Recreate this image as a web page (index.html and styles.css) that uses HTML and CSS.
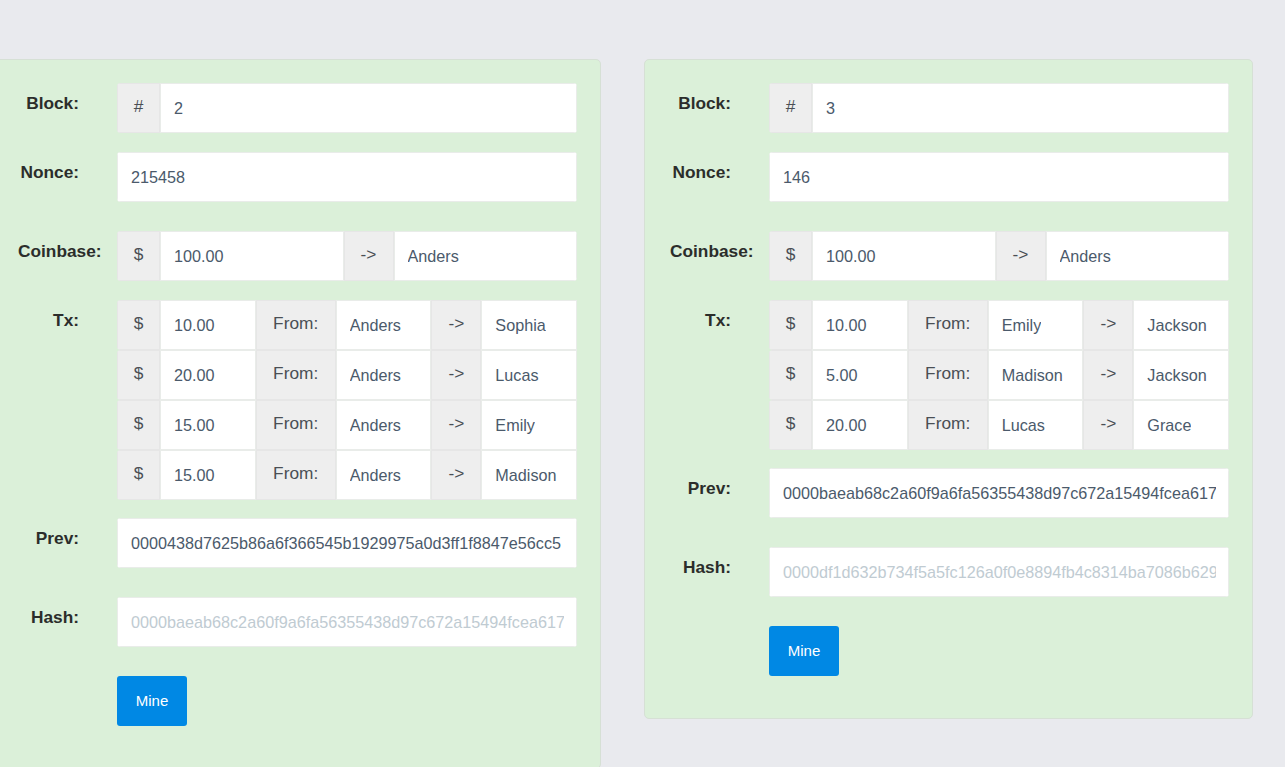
FILE: index.html
```html
<!DOCTYPE html>
<html lang="en">
<head>
<meta charset="utf-8">
<title>Blockchain</title>
<link rel="stylesheet" href="styles.css">
</head>
<body>
<div class="chain">
  <section class="card">
    <div class="row">
      <div class="label">Block:</div>
      <div class="group"><span class="addon addon-sym">#</span><div class="field"><span class="val">2</span></div></div>
    </div>
    <div class="row row-wide">
      <div class="label">Nonce:</div>
      <div class="group"><div class="field"><span class="val">215458</span></div></div>
    </div>
    <div class="row">
      <div class="label">Coinbase:</div>
      <div class="group"><span class="addon addon-sym">$</span><div class="field"><span class="val">100.00</span></div><span class="addon addon-arrow">-&gt;</span><div class="field"><span class="val">Anders</span></div></div>
    </div>
    <div class="row row-tx">
      <div class="label">Tx:</div>
      <div class="tx-list">
        <div class="group"><span class="addon addon-sym">$</span><div class="field"><span class="val">10.00</span></div><span class="addon addon-from">From:</span><div class="field"><span class="val">Anders</span></div><span class="addon addon-arrow">-&gt;</span><div class="field"><span class="val">Sophia</span></div></div>
        <div class="group"><span class="addon addon-sym">$</span><div class="field"><span class="val">20.00</span></div><span class="addon addon-from">From:</span><div class="field"><span class="val">Anders</span></div><span class="addon addon-arrow">-&gt;</span><div class="field"><span class="val">Lucas</span></div></div>
        <div class="group"><span class="addon addon-sym">$</span><div class="field"><span class="val">15.00</span></div><span class="addon addon-from">From:</span><div class="field"><span class="val">Anders</span></div><span class="addon addon-arrow">-&gt;</span><div class="field"><span class="val">Emily</span></div></div>
        <div class="group"><span class="addon addon-sym">$</span><div class="field"><span class="val">15.00</span></div><span class="addon addon-from">From:</span><div class="field"><span class="val">Anders</span></div><span class="addon addon-arrow">-&gt;</span><div class="field"><span class="val">Madison</span></div></div>
      </div>
    </div>
    <div class="row row-wide">
      <div class="label">Prev:</div>
      <div class="group"><div class="field"><span class="val">0000438d7625b86a6f366545b1929975a0d3ff1f8847e56cc5</span></div></div>
    </div>
    <div class="row row-wide">
      <div class="label">Hash:</div>
      <div class="group"><div class="field field-hash"><span class="val">0000baeab68c2a60f9a6fa56355438d97c672a15494fcea617</span></div></div>
    </div>
    <div class="row row-last">
      <div class="label"></div>
      <div><button class="mine" type="button">Mine</button></div>
    </div>
  </section>

  <section class="card">
    <div class="row">
      <div class="label">Block:</div>
      <div class="group"><span class="addon addon-sym">#</span><div class="field"><span class="val">3</span></div></div>
    </div>
    <div class="row row-wide">
      <div class="label">Nonce:</div>
      <div class="group"><div class="field"><span class="val">146</span></div></div>
    </div>
    <div class="row">
      <div class="label">Coinbase:</div>
      <div class="group"><span class="addon addon-sym">$</span><div class="field"><span class="val">100.00</span></div><span class="addon addon-arrow">-&gt;</span><div class="field"><span class="val">Anders</span></div></div>
    </div>
    <div class="row row-tx">
      <div class="label">Tx:</div>
      <div class="tx-list">
        <div class="group"><span class="addon addon-sym">$</span><div class="field"><span class="val">10.00</span></div><span class="addon addon-from">From:</span><div class="field"><span class="val">Emily</span></div><span class="addon addon-arrow">-&gt;</span><div class="field"><span class="val">Jackson</span></div></div>
        <div class="group"><span class="addon addon-sym">$</span><div class="field"><span class="val">5.00</span></div><span class="addon addon-from">From:</span><div class="field"><span class="val">Madison</span></div><span class="addon addon-arrow">-&gt;</span><div class="field"><span class="val">Jackson</span></div></div>
        <div class="group"><span class="addon addon-sym">$</span><div class="field"><span class="val">20.00</span></div><span class="addon addon-from">From:</span><div class="field"><span class="val">Lucas</span></div><span class="addon addon-arrow">-&gt;</span><div class="field"><span class="val">Grace</span></div></div>
      </div>
    </div>
    <div class="row row-wide">
      <div class="label">Prev:</div>
      <div class="group"><div class="field"><span class="val">0000baeab68c2a60f9a6fa56355438d97c672a15494fcea617</span></div></div>
    </div>
    <div class="row row-wide">
      <div class="label">Hash:</div>
      <div class="group"><div class="field field-hash"><span class="val">0000df1d632b734f5a5fc126a0f0e8894fb4c8314ba7086b629</span></div></div>
    </div>
    <div class="row row-last">
      <div class="label"></div>
      <div><button class="mine" type="button">Mine</button></div>
    </div>
  </section>
</div>
</body>
</html>
```
FILE: styles.css
```css
* { box-sizing: border-box; }
html, body {
  margin: 0;
  height: 100%;
  overflow: hidden;
  background: #e9eaee;
  font-family: "Liberation Sans", Arial, sans-serif;
}
.chain {
  display: flex;
  align-items: flex-start;
  gap: 43px;
  padding-top: 59px;
  margin-left: -8px;
}
.card {
  flex: 0 0 609px;
  width: 609px;
  background: #dbf0d9;
  border: 1px solid #d6e0d5;
  border-radius: 5px;
  padding: 23px 23px 42px 25px;
}
.row {
  display: grid;
  grid-template-columns: 61px 460px;
  column-gap: 38px;
  margin-bottom: 19px;
}
.row-wide { margin-bottom: 29px; }
.row-tx { margin-bottom: 18px; }
.row-last { margin-bottom: 0; }
.label {
  font-size: 17.3px;
  font-weight: bold;
  color: #2b2d2b;
  line-height: 41px;
  text-align: right;
  white-space: nowrap;
}
.tx-list { display: flex; flex-direction: column; }
.group {
  display: flex;
  height: 50px;
  border-radius: 4px;
  overflow: hidden;
}
.tx-list .group { border-radius: 4px 0 0 4px; }
.addon {
  flex: 0 0 auto;
  display: flex;
  align-items: center;
  justify-content: center;
  background: #eeeeee;
  border: 1px solid #e6e6e6;
  color: #4a4f55;
  font-size: 17.3px;
  padding-bottom: 3px;
}
.addon-sym { width: 43px; }
.addon-from { width: 80px; }
.addon-arrow { width: 50px; }
.field {
  flex: 1 1 0;
  min-width: 0;
  display: flex;
  align-items: center;
  background: #ffffff;
  border: 1px solid #e9ece9;
  padding: 1px 12px 0 13px;
  font-size: 16.2px;
  color: #4b5a6b;
}
.val {
  display: block;
  overflow: hidden;
  white-space: nowrap;
}
.field-hash { color: #c0cbd2; }
.mine {
  width: 70px;
  height: 50px;
  border: none;
  border-radius: 3px;
  background: #0088e4;
  color: #ffffff;
  font-family: "Liberation Sans", Arial, sans-serif;
  font-size: 15px;
  padding: 0 0 2px;
}
```
